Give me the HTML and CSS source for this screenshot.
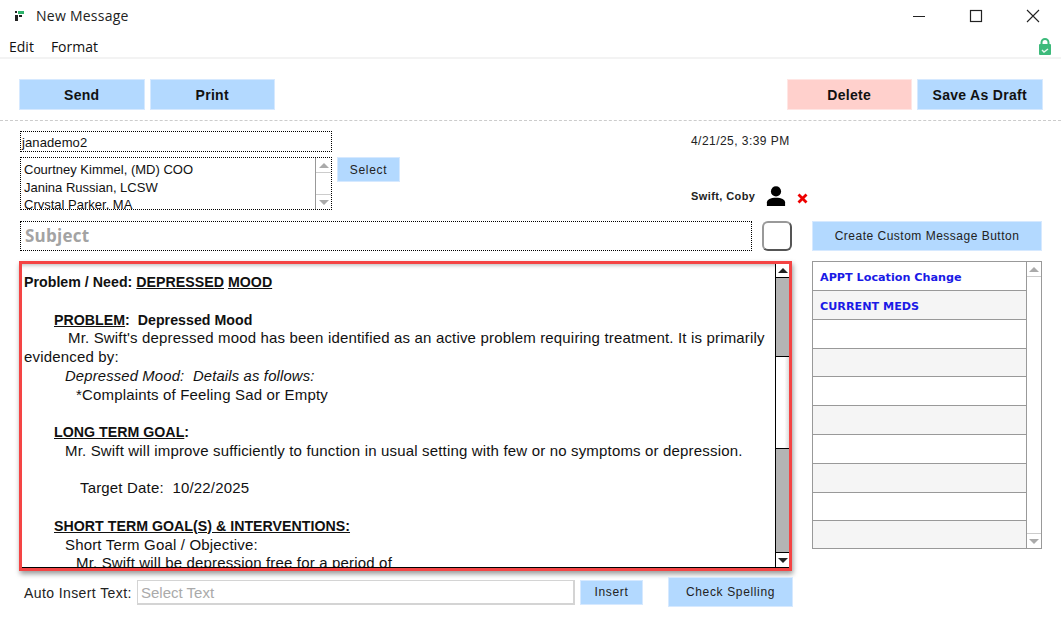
FILE: index.html
```html
<!DOCTYPE html>
<html lang="en">
<head>
<meta charset="utf-8">
<title>New Message</title>
<link rel="stylesheet" href="styles.css">
</head>
<body>
<div class="window">
  <header class="titlebar">
    <svg class="app-icon" width="12" height="12" viewBox="0 0 12 12"><rect x="2" y="1" width="2" height="2" fill="#222"/><rect x="5" y="1" width="6" height="3" fill="#2db36b"/><rect x="2" y="5" width="3" height="6" fill="#222"/><rect x="6" y="5" width="3" height="2" fill="#222"/></svg>
    <span class="title">New Message</span>
    <div class="win-controls">
      <svg width="14" height="14" viewBox="0 0 14 14"><path d="M1 7.5H13" stroke="#222" stroke-width="1"/></svg>
      <svg width="14" height="14" viewBox="0 0 14 14"><rect x="1.5" y="1.5" width="11" height="11" fill="none" stroke="#222" stroke-width="1.2"/></svg>
      <svg width="14" height="14" viewBox="0 0 14 14"><path d="M1 1L13 13M13 1L1 13" stroke="#222" stroke-width="1.1"/></svg>
    </div>
  </header>
  <nav class="menubar">
    <span>Edit</span><span>Format</span>
    <svg class="lock" width="14" height="18" viewBox="0 0 14 18"><path d="M3.5 8V5.5a3.5 3.5 0 0 1 7 0V8" fill="none" stroke="#3dba7b" stroke-width="2"/><rect x="1" y="7" width="12" height="11" rx="1" fill="#3dba7b"/><path d="M4 13l2 2 4-3" fill="none" stroke="#e8f8ef" stroke-width="1.4"/></svg>
  </nav>
  <div class="toolbar">
    <div class="btn-group">
      <button class="btn blue">Send</button>
      <button class="btn blue">Print</button>
    </div>
    <div class="btn-group">
      <button class="btn red">Delete</button>
      <button class="btn blue">Save As Draft</button>
    </div>
  </div>
  <main class="content">
    <section class="left">
      <div class="head-row">
        <div class="recipients">
          <div class="field from">janademo2</div>
          <div class="to-row">
            <div class="field to">
              <div class="to-list">
                <div>Courtney Kimmel, (MD) COO</div>
                <div>Janina Russian, LCSW</div>
                <div>Crystal Parker, MA</div>
              </div>
              <div class="mini-scroll">
                <div class="mini-step"><span class="arrow up"></span></div>
                <div class="mini-step"><span class="arrow down"></span></div>
              </div>
            </div>
            <button class="btn blue small select">Select</button>
          </div>
        </div>
        <div class="meta">
          <div class="date">4/21/25, 3:39 PM</div>
          <div class="patient">
            <span class="patient-name">Swift, Coby</span>
            <svg class="person" width="20" height="20" viewBox="0 0 22 22"><circle cx="11" cy="6" r="5.6" fill="#000"/><path d="M1 22v-4C1 15 5 12.8 11 12.8s10 2.2 10 5.2v4z" fill="#000"/></svg>
            <svg class="remove" width="11" height="11" viewBox="0 0 11 11"><path d="M1.5 1.5L9.5 9.5M9.5 1.5L1.5 9.5" stroke="#ee0000" stroke-width="2.8"/></svg>
          </div>
        </div>
      </div>
      <div class="subject-row">
        <div class="field subject">Subject</div>
        <div class="checkbox"></div>
      </div>
      <div class="editor">
        <div class="editor-text">
          <div class="bold">Problem / Need: <u>DEPRESSED</u> <u>MOOD</u></div>
          <div>&nbsp;</div>
          <div class="i1 bold"><u>PROBLEM</u>:&nbsp; Depressed Mood</div>
          <div class="i2">Mr. Swift's depressed mood has been identified as an active problem requiring treatment. It is primarily</div>
          <div>evidenced by:</div>
          <div class="i3"><em class="note">Depressed Mood:&nbsp; Details as follows:</em></div>
          <div class="i4">*Complaints of Feeling Sad or Empty</div>
          <div>&nbsp;</div>
          <div class="i1 bold"><u>LONG TERM GOAL</u>:</div>
          <div class="i3">Mr. Swift will improve sufficiently to function in usual setting with few or no symptoms or depression.</div>
          <div>&nbsp;</div>
          <div class="i5">Target Date:&nbsp; 10/22/2025</div>
          <div>&nbsp;</div>
          <div class="i1 bold"><u>SHORT TERM GOAL(S) &amp; INTERVENTIONS:</u></div>
          <div class="i3">Short Term Goal / Objective:</div>
          <div class="i4">Mr. Swift will be depression free for a period of</div>
        </div>
        <div class="editor-scroll">
          <div class="step top-step"><span class="arrow up dark"></span></div>
          <div class="track upper"></div>
          <div class="thumb"></div>
          <div class="track lower"></div>
          <div class="step bottom-step"><span class="arrow down dark"></span></div>
        </div>
      </div>
      <div class="insert-row">
        <label class="insert-label">Auto Insert Text:</label>
        <div class="insert-input">Select Text</div>
        <button class="btn blue small insert">Insert</button>
        <button class="btn blue small spell">Check Spelling</button>
      </div>
    </section>
    <aside class="right">
      <button class="btn blue small custom">Create Custom Message Button</button>
      <div class="msg-list">
        <div class="msg-rows">
          <div class="msg-row">APPT Location Change</div>
          <div class="msg-row">CURRENT MEDS</div>
          <div class="msg-row"></div>
          <div class="msg-row"></div>
          <div class="msg-row"></div>
          <div class="msg-row"></div>
          <div class="msg-row"></div>
          <div class="msg-row"></div>
          <div class="msg-row"></div>
          <div class="msg-row"></div>
        </div>
        <div class="list-scroll">
          <div class="list-step"><span class="arrow up"></span></div>
          <div class="list-step"><span class="arrow down"></span></div>
        </div>
      </div>
    </aside>
  </main>
</div>
</body>
</html>
```

FILE: styles.css
```css
* { box-sizing: border-box; }
html, body { margin: 0; padding: 0; background: #fff; }
body { font-family: "Liberation Sans", Arial, sans-serif; color: #111; overflow: hidden; }
.window { width: 1061px; height: 623px; overflow: hidden; }

.titlebar { height: 32px; display: flex; align-items: center; padding-left: 13px; }
.app-icon { margin-right: 11px; }
.title { font-family: "Open Sans", sans-serif; font-size: 14px; letter-spacing: .25px; color: #222; margin-top: -2px; }
.win-controls { margin-left: auto; display: flex; gap: 43px; padding-right: 21px; }

.menubar { height: 27px; display: flex; align-items: center; gap: 17px; padding: 4px 9px 0 9px; font-family: "Open Sans", sans-serif; font-size: 14px; color: #111; border-bottom: 2px solid #f3f3f3; }
.lock { margin-left: auto; margin-top: -2px; }

.btn { border: 1px solid #d6e9ff; font-family: "Liberation Sans", Arial, sans-serif; font-weight: 700; font-size: 14px; letter-spacing: .3px; color: #111; padding: 0; cursor: default; }
.btn.blue { background: #b3d9ff; }
.btn.red { background: #ffd0cc; border-color: #ffe6e4; }
.btn.small { font-weight: 400; font-size: 12px; letter-spacing: .65px; color: #222; }
.btn.custom { letter-spacing: .5px; }

.toolbar { display: flex; justify-content: space-between; padding: 20px 18.5px 0 19px; height: 62px; border-bottom: 1px dashed #ccc; }
.btn-group { display: flex; gap: 5px; height: 31px; }
.btn-group .btn { width: 125.5px; }

.content { display: flex; padding: 0 19px; gap: 20px; }
.left { width: 773px; flex: none; }
.right { width: 230px; flex: none; padding-top: 100px; }

.head-row { display: flex; height: 100px; }
.recipients { width: 381px; flex: none; padding-top: 10px; }
.field { border: 1px dotted #000; background: #fff; }
.from { margin-left: 1px; width: 312px; height: 21px; font-size: 13px; letter-spacing: .1px; line-height: 21px; padding-left: 1px; }
.to-row { display: flex; align-items: flex-start; margin-top: 5px; margin-left: 1px; }
.to { width: 312px; height: 53px; display: flex; overflow: hidden; flex: none; }
.to-list { flex: 1; font-size: 13px; line-height: 17.5px; padding: 3px 0 0 3px; overflow: hidden; white-space: nowrap; }
.mini-scroll { width: 16px; flex: none; border-left: 1px solid #999; display: flex; flex-direction: column; justify-content: space-between; }
.mini-step { height: 15px; display: flex; align-items: center; justify-content: center; }
.mini-step:first-child { border-bottom: 1px solid #ccc; }
.mini-step:last-child { border-top: 1px solid #ccc; }
.select { width: 63px; height: 25px; margin-left: 5px; flex: none; }

.arrow { display: block; width: 0; height: 0; border-left: 5px solid transparent; border-right: 5px solid transparent; }
.arrow.up { border-bottom: 5px solid #aaa; }
.arrow.down { border-top: 5px solid #aaa; }
.arrow.up.dark { border-bottom-color: #222; }
.arrow.down.dark { border-top-color: #222; }

.meta { margin-left: 291px; padding-top: 13px; }
.date { font-size: 12px; letter-spacing: .45px; color: #222; white-space: nowrap; height: 14px; line-height: 14px; }
.patient { display: flex; align-items: center; margin-top: 38px; white-space: nowrap; }
.patient-name { font-size: 11px; font-weight: 700; letter-spacing: .4px; color: #222; }
.person { margin-left: 11px; }
.remove { margin-left: 11px; margin-top: 4px; }

.subject-row { display: flex; align-items: flex-start; gap: 10px; height: 40px; padding-left: 1px; }
.subject { width: 732px; height: 30px; font-family: "Open Sans", sans-serif; font-weight: 700; font-size: 17px; letter-spacing: .25px; color: #a3a3a3; line-height: 28px; padding-left: 4px; }
.checkbox { width: 30px; height: 30px; border: 2px solid #999; border-right-color: #555; border-bottom-color: #555; border-radius: 6px; background: #fff; }

.editor { width: 773px; height: 310px; border: 3px solid #f44444; box-shadow: 1px 3px 5px rgba(0,0,0,.4); display: flex; }
.editor-text { flex: 1; font-size: 15px; letter-spacing: .17px; line-height: 18.75px; padding: 9px 0 0 2px; overflow: hidden; color: #111; border-bottom: 1px solid #000; white-space: nowrap; box-shadow: inset 0 5px 4px -4px rgba(0,0,0,.3); }
.bold { font-weight: 700; font-size: 14.2px; letter-spacing: .02px; }
.note { font-size: 14.8px; }
.i1 { padding-left: 30px; }
.i2 { padding-left: 44px; }
.i3 { padding-left: 41px; }
.i4 { padding-left: 52px; }
.i5 { padding-left: 56px; }

.editor-scroll { width: 14px; flex: none; border-left: 1px solid #000; display: flex; flex-direction: column; border-bottom: 1px solid #000; }
.step { height: 13px; background: #fff; display: flex; align-items: center; justify-content: center; flex: none; }
.top-step { border-bottom: 1px solid #000; height: 14px; }
.bottom-step { border-top: 1px solid #000; height: 15px; }
.track { background: #b4b4b4; }
.upper { height: 79px; border-bottom: 1px solid #000; }
.thumb { height: 91px; background: linear-gradient(to right, #fff 65%, #ddd); }
.lower { flex: 1; border-top: 1px solid #000; }

.insert-row { display: flex; align-items: center; margin-top: 6px; height: 30px; }
.insert-label { font-size: 14px; letter-spacing: .4px; margin-left: 5px; width: 113px; flex: none; white-space: nowrap; color: #222; padding-top: 2px; }
.insert-input { width: 438px; height: 25px; border: 2px solid #d4d4d4; border-width: 1px 2px 2px 1px; font-size: 15px; color: #aaa; line-height: 24px; padding-left: 3px; flex: none; }
.insert { width: 63px; height: 25px; margin-left: 5px; flex: none; }
.spell { width: 125px; height: 30px; margin-left: 25px; flex: none; }

.custom { width: 230px; height: 30px; display: block; }
.msg-list { margin-top: 10px; width: 230px; height: 288px; border: 1px solid #999; display: flex; }
.msg-rows { flex: 1; overflow: hidden; }
.msg-row { height: 28.8px; border-bottom: 1px solid #999; font-family: "DejaVu Sans", sans-serif; font-size: 11.2px; font-weight: 700; color: #1a1ae6; line-height: 32px; padding-left: 7px; white-space: nowrap; }
.msg-row:first-child { height: 29px; }
.msg-row:nth-child(even) { background: #f5f5f5; }
.msg-row:last-child { border-bottom: 0; }
.list-scroll { width: 15px; flex: none; border-left: 1px solid #999; display: flex; flex-direction: column; justify-content: space-between; }
.list-step { height: 15px; display: flex; align-items: center; justify-content: center; }
.list-step:first-child { border-bottom: 1px solid #ccc; }
.list-step:last-child { border-top: 1px solid #ccc; }
```
